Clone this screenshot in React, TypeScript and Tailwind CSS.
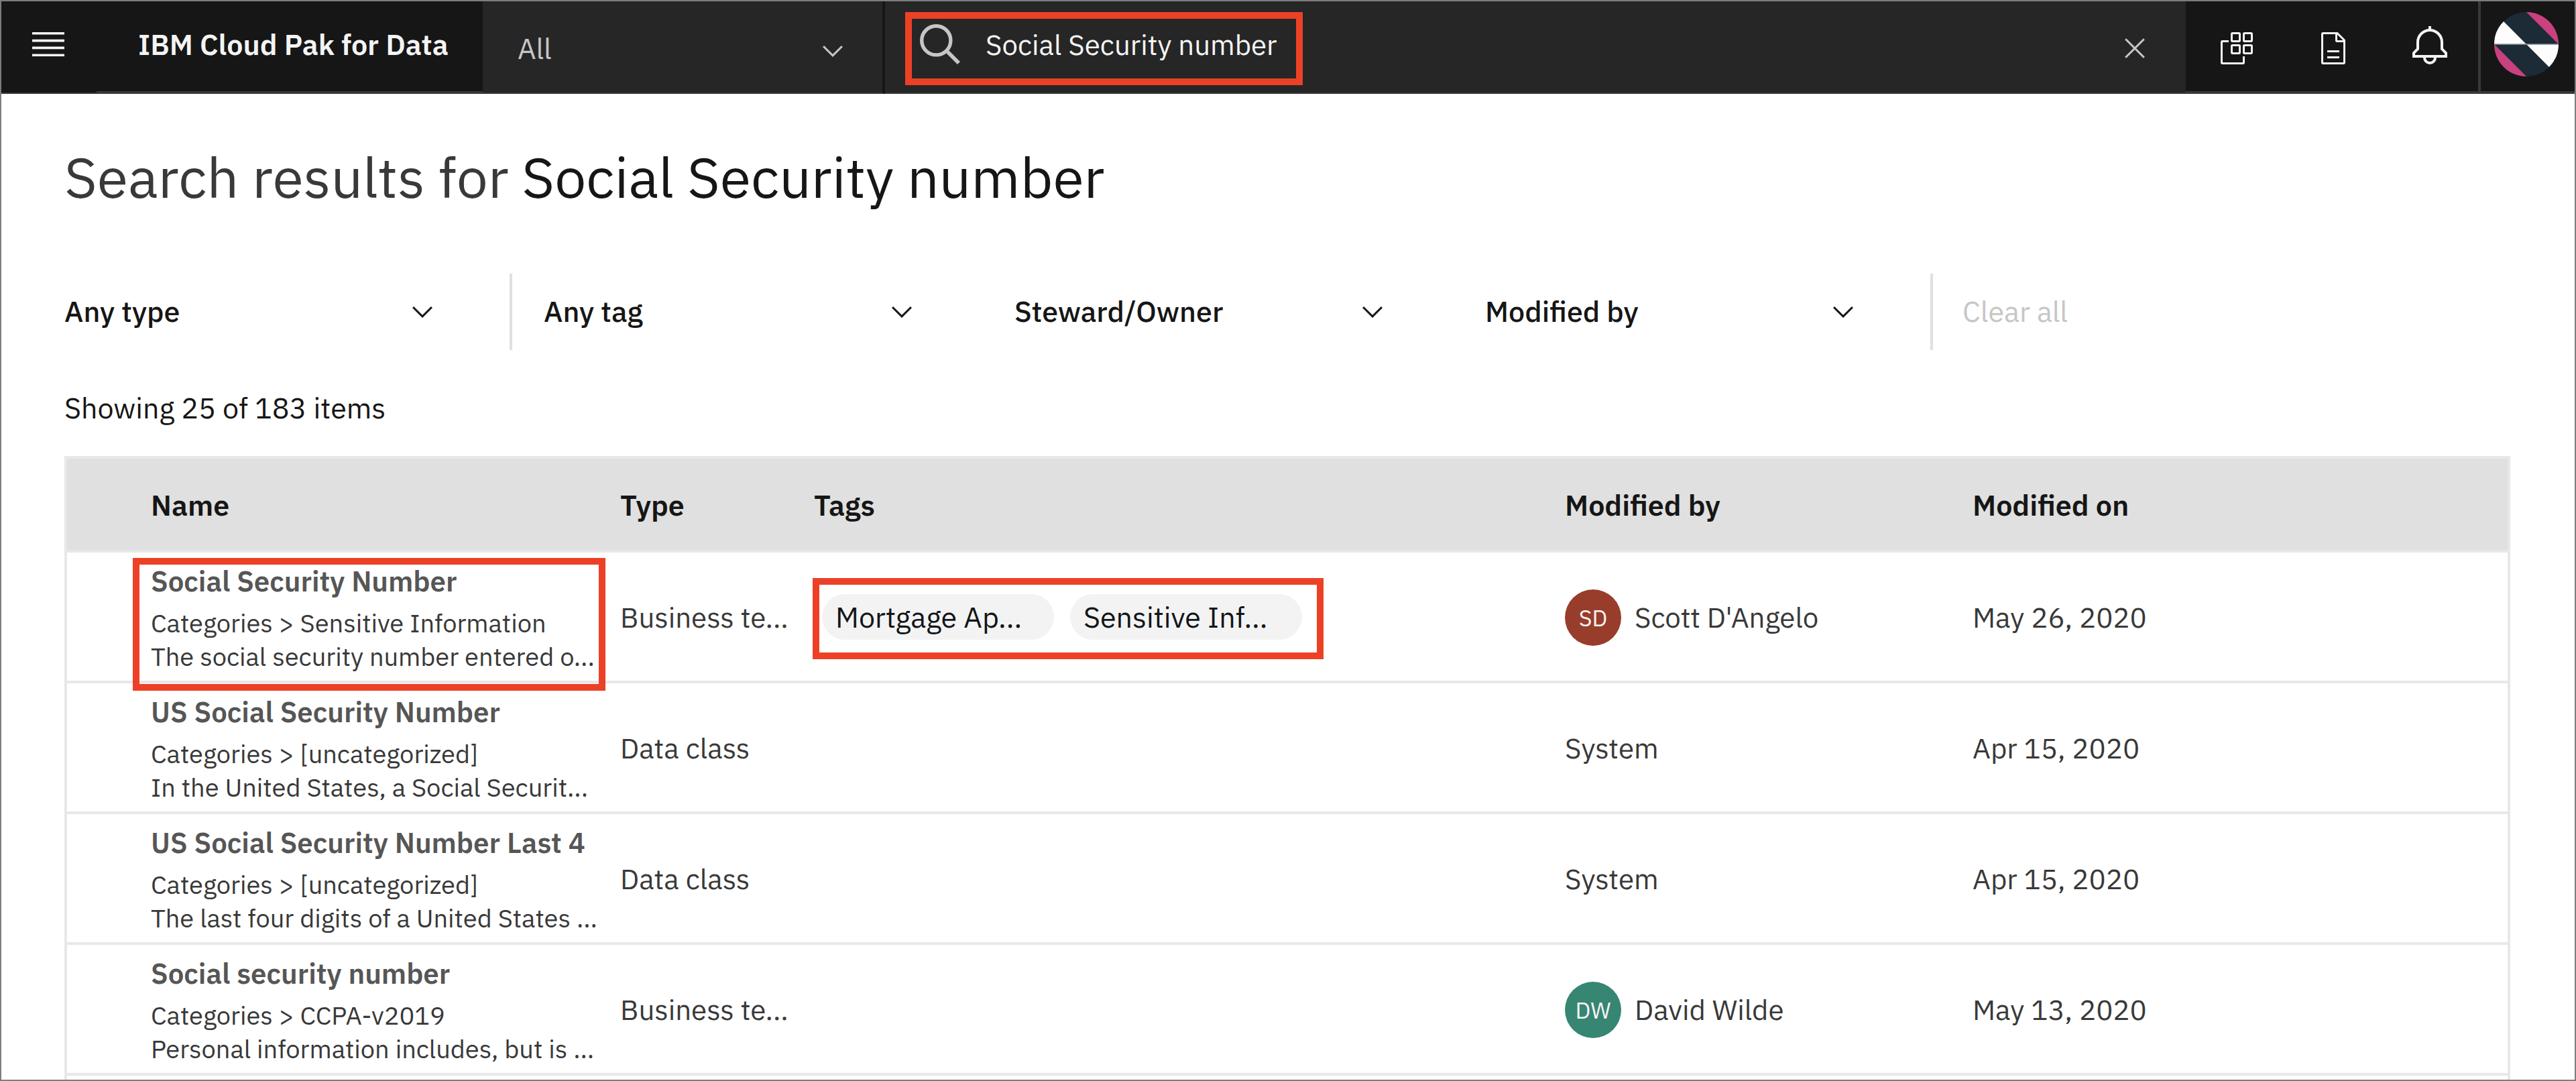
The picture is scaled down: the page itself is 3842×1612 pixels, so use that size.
import React from "react";

type Person = { name: string; initials?: string; badge?: string };

type Row = {
  name: string;
  category: string;
  description: string;
  type: string;
  tags: string[];
  modifiedBy: Person;
  modifiedOn: string;
  highlighted?: boolean;
};

const rows: Row[] = [
  {
    name: "Social Security Number",
    category: "Categories > Sensitive Information",
    description: "The social security number entered o...",
    type: "Business te...",
    tags: ["Mortgage Ap...", "Sensitive Inf..."],
    modifiedBy: { name: "Scott D'Angelo", initials: "SD", badge: "bg-[#983d2c]" },
    modifiedOn: "May 26, 2020",
    highlighted: true,
  },
  {
    name: "US Social Security Number",
    category: "Categories > [uncategorized]",
    description: "In the United States, a Social Securit...",
    type: "Data class",
    tags: [],
    modifiedBy: { name: "System" },
    modifiedOn: "Apr 15, 2020",
  },
  {
    name: "US Social Security Number Last 4",
    category: "Categories > [uncategorized]",
    description: "The last four digits of a United States ...",
    type: "Data class",
    tags: [],
    modifiedBy: { name: "System" },
    modifiedOn: "Apr 15, 2020",
  },
  {
    name: "Social security number",
    category: "Categories > CCPA-v2019",
    description: "Personal information includes, but is ...",
    type: "Business te...",
    tags: [],
    modifiedBy: { name: "David Wilde", initials: "DW", badge: "bg-[#378573]" },
    modifiedOn: "May 13, 2020",
  },
];

function ChevronDown({ className = "" }: { className?: string }) {
  return (
    <svg viewBox="0 0 16 16" fill="currentColor" aria-hidden="true" className={`size-12 ${className}`}>
      <path d="M8 11 3 6l.7-.7L8 9.6l4.3-4.3.7.7z" />
    </svg>
  );
}

function MenuIcon() {
  return (
    <svg viewBox="0 0 48 36" fill="currentColor" aria-hidden="true" className="h-9 w-12">
      <path d="M0 0h48v3.6H0zM0 10.8h48v3.6H0zM0 21.6h48v3.6H0zM0 32.4h48V36H0z" />
    </svg>
  );
}

function SearchIcon() {
  return (
    <svg viewBox="0 0 60 60" fill="none" stroke="currentColor" aria-hidden="true" className="size-[60px]">
      <circle cx="24.3" cy="24.3" r="21.6" strokeWidth="5.4" />
      <path d="M40.5 40.5 58 58" strokeWidth="5.6" />
    </svg>
  );
}

function CloseIcon() {
  return (
    <svg viewBox="0 0 16 16" fill="none" stroke="currentColor" aria-hidden="true" className="size-12">
      <path d="M3.4 3.4l9.2 9.2M12.6 3.4l-9.2 9.2" />
    </svg>
  );
}

function SwitcherIcon() {
  return (
    <svg viewBox="0 0 16 16" fill="none" stroke="currentColor" aria-hidden="true" className="size-12">
      <path d="M4 4.5H.9a.4.4 0 0 0-.4.4v10.2c0 .2.2.4.4.4h10.2c.2 0 .4-.2.4-.4V12" />
      <rect x="5.5" y=".5" width="4" height="4" rx=".4" />
      <rect x="11.5" y=".5" width="4" height="4" rx=".4" />
      <rect x="5.5" y="6.5" width="4" height="4" rx=".4" />
      <rect x="11.5" y="6.5" width="4" height="4" rx=".4" />
    </svg>
  );
}

function DocumentIcon() {
  return (
    <svg viewBox="0 0 12 16" fill="none" stroke="currentColor" aria-hidden="true" className="h-12 w-9">
      <path d="M.9.5H8L11.5 4v11.1c0 .2-.2.4-.4.4H.9c-.2 0-.4-.2-.4-.4V.9c0-.2.2-.4.4-.4z" />
      <path d="M7.5.5v3.6c0 .2.2.4.4.4h3.6M3 9.5h6M3 12.5h6" />
    </svg>
  );
}

function BellIcon() {
  return (
    <svg viewBox="0 0 52 57" fill="none" stroke="currentColor" strokeWidth="4" aria-hidden="true" className="h-[57px] w-[52px]">
      <path d="M26 0v6" />
      <path d="M8 24a18 18 0 0 1 36 0v10l6 6v5H2v-5l6-6z" />
      <path d="M18 47a8 8 0 0 0 16 0" />
    </svg>
  );
}

function ProfileMark() {
  return (
    <svg viewBox="0 0 96 96" aria-hidden="true" className="size-24">
      <circle cx="48" cy="48" r="48" fill="#1c2b35" />
      <path d="M48 0a48 48 0 0 1 48 48z" fill="#c9417f" />
      <path d="M48 96A48 48 0 0 1 0 48z" fill="#c9417f" />
      <path d="M48 48H0a48 48 0 0 1 14.06-33.94z" fill="#fdfdfd" />
      <path d="M48 48h48a48 48 0 0 1-14.06 33.94z" fill="#fdfdfd" />
      <path d="M0 48h96" stroke="#87919a" strokeWidth="1.6" />
    </svg>
  );
}

function Highlight({ className }: { className: string }) {
  return (
    <span
      aria-hidden="true"
      className={`pointer-events-none absolute border-[10px] border-[#ec4126] ${className}`}
    />
  );
}

function Filter({ label }: { label: string }) {
  return (
    <div className="relative w-[558px]">
      <select aria-label={label} className="h-full w-full appearance-none bg-transparent pb-0.5 text-[43px] font-medium text-[#161616]">
        <option>{label}</option>
      </select>
      <ChevronDown className="pointer-events-none absolute inset-y-0 right-0 my-auto text-[#161616]" />
    </div>
  );
}

function Header() {
  return (
    <header className="flex h-[138px] shrink-0 bg-[#161616] text-[#f4f4f4]">
      <button type="button" aria-label="Menu" className="flex w-[142px] items-center justify-center border-b-2 border-[#393939] pr-0.5 pb-2">
        <MenuIcon />
      </button>
      <a href="#home" className="flex w-[576px] items-center border-b-4 border-[#393939] pb-1.5 pl-[62px] text-[43px] font-semibold whitespace-nowrap">
        IBM Cloud Pak for Data
      </a>

      <div className="relative w-[600px] border-r-4 border-b-2 border-r-[#161616] border-b-[#393939] bg-[#262626] text-[#c6c6c6]">
        <select aria-label="Search scope" className="h-full w-full appearance-none bg-transparent pt-1 pl-[52px] text-[43px]">
          <option>All</option>
        </select>
        <ChevronDown className="pointer-events-none absolute inset-y-0 right-[50px] my-auto translate-y-1.5" />
      </div>

      <form role="search" className="relative flex flex-1 items-center border-b-2 border-[#393939] bg-[#262626] pr-[52px] pl-[52px] text-[#c6c6c6]">
        <label htmlFor="search" aria-label="Search" className="mb-2">
          <SearchIcon />
        </label>
        <input
          id="search"
          type="text"
          defaultValue="Social Security number"
          className="ml-[38px] h-full min-w-0 flex-1 bg-transparent pb-2 text-[42px] text-[#f4f4f4] outline-none"
        />
        <button type="button" aria-label="Clear search" className="mt-1">
          <CloseIcon />
        </button>
        <Highlight className="top-4 left-[30px] h-[109px] w-[593px]" />
      </form>

      <nav aria-label="Tools" className="flex border-b-4 border-[#393939] pl-1">
        <button type="button" aria-label="Switcher" className="flex w-36 items-center justify-center pt-1.5">
          <SwitcherIcon />
        </button>
        <button type="button" aria-label="Documents" className="flex w-36 items-center justify-center pt-1.5">
          <DocumentIcon />
        </button>
        <button type="button" aria-label="Notifications" className="flex w-36 items-center justify-center pb-1">
          <BellIcon />
        </button>
        <button type="button" aria-label="Profile" className="flex w-36 items-center justify-center border-l-4 border-[#393939] pr-1 pb-1.5">
          <ProfileMark />
        </button>
      </nav>
    </header>
  );
}

export default function App() {
  return (
    <div className="flex h-screen flex-col overflow-hidden border-2 border-[#7d7d7d] bg-white font-['IBM_Plex_Sans','Noto_Sans',sans-serif] text-[#161616]">
      <Header />

      <main className="flex flex-1 flex-col pr-24 pl-[94px]">
        <h1 className="mt-[70px] text-[84px] leading-[108px] text-[#393939]">
          Search results for <span className="text-[#161616]">Social Security number</span>
        </h1>

        <div className="mt-[90px] flex h-[114px] shrink-0 items-stretch">
          <Filter label="Any type" />
          <div className="mr-[47px] ml-[106px] w-1 bg-[#e0e0e0]" />
          <div className="flex gap-36">
            <Filter label="Any tag" />
            <Filter label="Steward/Owner" />
            <Filter label="Modified by" />
          </div>
          <div className="mr-11 ml-[106px] w-1 bg-[#e0e0e0]" />
          <button type="button" disabled className="pb-0.5 text-[43px] text-[#c6c6c6]">
            Clear all
          </button>
        </div>

        <p className="mt-[58px] text-[43px] leading-[56px]">Showing 25 of 183 items</p>

        <div className="mt-11 flex-1 border-4 border-b-0 border-[#e8e8e8]">
          <table className="w-full table-fixed border-separate border-spacing-0 text-[42px] leading-[54px]">
            <colgroup>
              <col className="w-[125px]" />
              <col className="w-[700px]" />
              <col className="w-[289px]" />
              <col className="w-[1120px]" />
              <col className="w-[608px]" />
              <col />
            </colgroup>
            <thead className="text-[43px]">
              <tr className="h-[140px] bg-[#e0e0e0] text-left">
                {["", "Name", "Type", "Tags", "Modified by", "Modified on"].map((title) => (
                  <th key={title} className="border-b-4 border-[#e8e8e8] pt-0.5 font-semibold">
                    {title}
                  </th>
                ))}
              </tr>
            </thead>
            <tbody className="text-[#393939]">
              {rows.map((row) => (
                <tr key={row.name} className="h-[195px] whitespace-nowrap *:border-b-4 *:border-[#e8e8e8]">
                  <td />
                  <td>
                    <div className="relative pt-1">
                      <a href="#result" className="block font-semibold text-[#565656]">
                        {row.name}
                      </a>
                      <div className="mt-2.5 text-[38px] leading-[50px]">{row.category}</div>
                      <div className="text-[38px] leading-[50px]">{row.description}</div>
                      {row.highlighted && <Highlight className="-top-1 -left-[27px] h-[198px] w-[705px]" />}
                    </div>
                  </td>
                  <td className="pt-0.5">{row.type}</td>
                  <td>
                    {row.tags.length > 0 && (
                      <div className="relative flex gap-6 pl-3">
                        {row.tags.map((tag) => (
                          <span key={tag} className="h-[68px] w-[346px] rounded-full bg-[#f3f3f3] pl-5 text-[43px] leading-[68px] text-[#121619]">
                            {tag}
                          </span>
                        ))}
                        <Highlight className="-top-6 -left-0.5 h-[121px] w-[762px]" />
                      </div>
                    )}
                  </td>
                  <td className="pt-0.5">
                    <div className="flex items-center gap-5">
                      {row.modifiedBy.initials && (
                        <span className={`flex size-[84px] items-center justify-center rounded-full text-[34px] text-[#f4f4f4] ${row.modifiedBy.badge}`}>
                          {row.modifiedBy.initials}
                        </span>
                      )}
                      {row.modifiedBy.name}
                    </div>
                  </td>
                  <td className="pt-0.5">{row.modifiedOn}</td>
                </tr>
              ))}
            </tbody>
          </table>
        </div>
      </main>
    </div>
  );
}
